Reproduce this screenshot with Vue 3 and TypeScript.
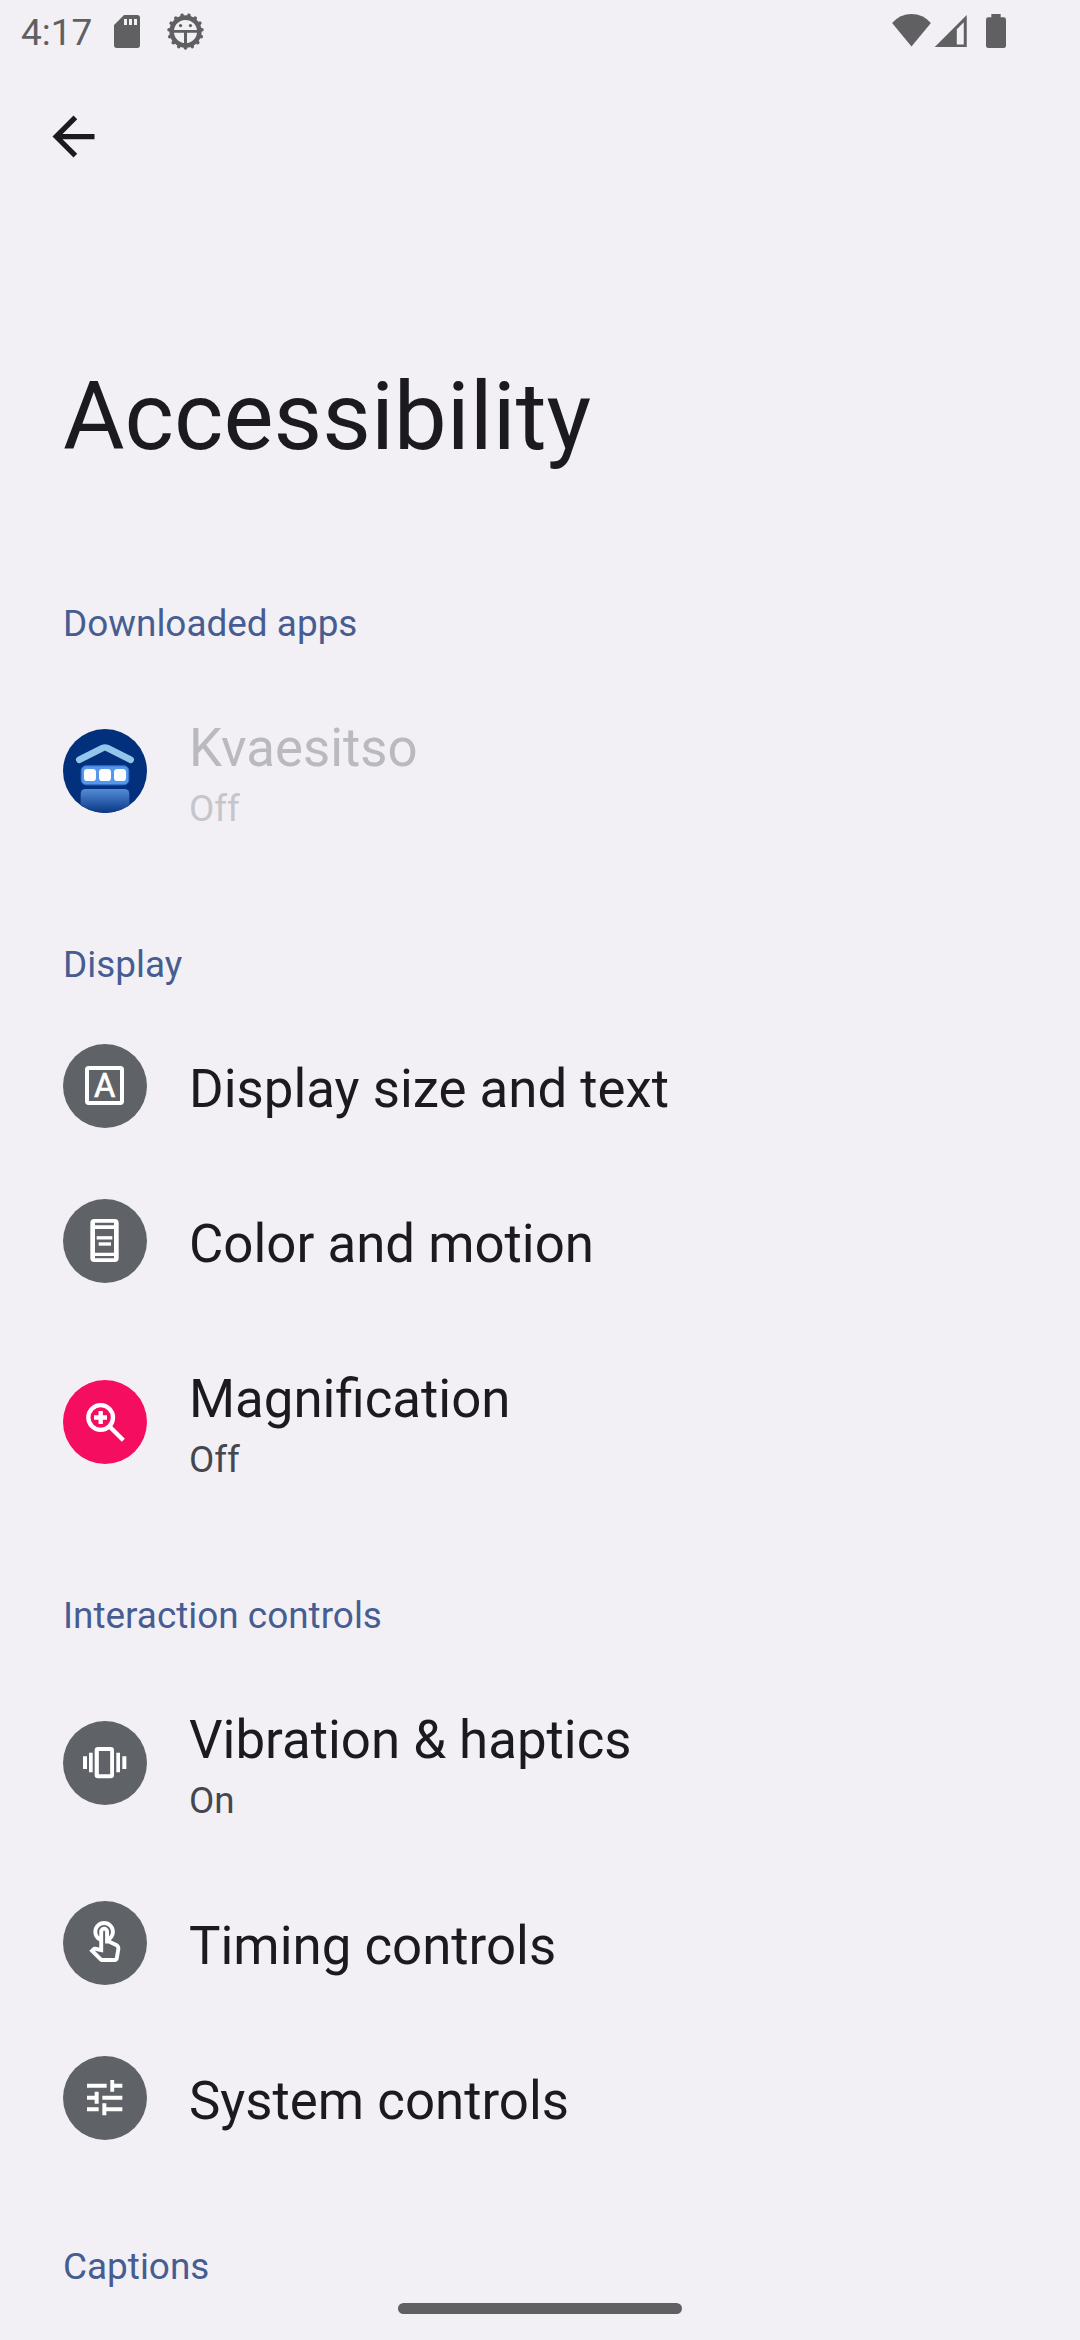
<script setup lang="ts">
type IconName = 'kvaesitso' | 'text' | 'color' | 'zoom' | 'vibration' | 'touch' | 'tune'

interface Item {
  icon: IconName
  title: string
  summary?: string
  disabled?: boolean
}

interface Section {
  title: string
  items: Item[]
}

const sections: Section[] = [
  {
    title: 'Downloaded apps',
    items: [{ icon: 'kvaesitso', title: 'Kvaesitso', summary: 'Off', disabled: true }],
  },
  {
    title: 'Display',
    items: [
      { icon: 'text', title: 'Display size and text' },
      { icon: 'color', title: 'Color and motion' },
      { icon: 'zoom', title: 'Magnification', summary: 'Off' },
    ],
  },
  {
    title: 'Interaction controls',
    items: [
      { icon: 'vibration', title: 'Vibration & haptics', summary: 'On' },
      { icon: 'touch', title: 'Timing controls' },
      { icon: 'tune', title: 'System controls' },
    ],
  },
  { title: 'Captions', items: [] },
]

const teeth = Array.from({ length: 15 }, (_, i) => i * 24)
</script>

<template>
  <div class="screen">
    <header class="status">
      <span class="clock">4:17</span>
      <svg class="sd" viewBox="0 0 78 99">
        <path fill-rule="evenodd" d="M30 0H70Q78 0 78 8V91Q78 99 70 99H8Q0 99 0 91V30ZM30 12V30H39V12ZM45 12V30H54V12ZM60 12V30H69V12Z" />
      </svg>
      <svg class="gear" viewBox="-56 -56 112 112">
        <circle r="42" fill="none" stroke="currentColor" stroke-width="14" />
        <line v-for="a in teeth" :key="a" y1="42" y2="50" stroke="currentColor" stroke-width="11" stroke-linecap="round" :transform="`rotate(${a})`" />
        <path d="M-38 -4.500H38V4H4.500V38H-4.500V4H-38Z" />
        <circle cx="-15" cy="-18" r="5" />
        <circle cx="15" cy="-18" r="5" />
      </svg>
      <span class="spacer"></span>
      <svg class="wifi" viewBox="0 0 117 98">
        <path d="M0 27Q24 0 58.500 0T117 27L58.500 98Z" />
      </svg>
      <svg class="signal" viewBox="0 0 98 98">
        <path fill-rule="evenodd" d="M0 98L98 0V98ZM68 43V89H89V22Z" />
      </svg>
      <svg class="battery" viewBox="0 0 60 102">
        <path d="M16 0H44V10H53Q60 10 60 17V95Q60 102 53 102H7Q0 102 0 95V17Q0 10 7 10H16Z" />
      </svg>
    </header>

    <div class="toolbar">
      <svg class="back" viewBox="0 0 24 24">
        <path d="M20 11H7.830l5.590-5.590L12 4l-8 8 8 8 1.410-1.410L7.830 13H20v-2z" />
      </svg>
    </div>

    <h1>Accessibility</h1>

    <main>
      <section v-for="s in sections" :key="s.title">
        <h2>{{ s.title }}</h2>
        <div v-for="item in s.items" :key="item.title" class="row" :class="[item.icon, { double: item.summary, disabled: item.disabled }]">
          <svg class="icon" viewBox="0 0 252 252">
            <defs>
              <clipPath id="disc"><circle cx="126" cy="126" r="126" /></clipPath>
              <linearGradient id="fade" x1="0" y1="0" x2="0" y2="1">
                <stop offset="0" stop-color="#538cd8" />
                <stop offset="1" stop-color="#05317f" />
              </linearGradient>
            </defs>
            <circle class="disc" cx="126" cy="126" r="126" />
            <g v-if="item.icon === 'kvaesitso'" clip-path="url(#disc)">
              <path d="M49 92L119 57Q126 54 133 57L203 92" fill="none" stroke="#94c6e9" stroke-width="20" stroke-linecap="round" stroke-linejoin="round" />
              <rect x="54.500" y="110.500" width="143" height="57" rx="15" fill="#5596ee" stroke="#3471cb" stroke-width="3" />
              <rect x="63" y="120" width="36" height="36" rx="10" fill="#fff" />
              <rect x="108" y="120" width="36" height="36" rx="10" fill="#fff" />
              <rect x="153" y="120" width="36" height="36" rx="10" fill="#fff" />
              <rect x="53" y="180" width="146" height="76" rx="14" fill="url(#fade)" />
            </g>
            <g v-else-if="item.icon === 'text'">
              <rect x="72" y="72" width="105" height="105" rx="5" fill="none" stroke="#fff" stroke-width="12" />
              <text x="125" y="159.500" text-anchor="middle" class="letter">A</text>
            </g>
            <g v-else-if="item.icon === 'color'" fill="#fff">
              <path fill-rule="evenodd" d="M94 60H155Q167 60 167 72V177Q167 189 155 189H94Q82 189 82 177V72Q82 60 94 60ZM96 71.500V78.500H153V71.500ZM96 90V161H153V90ZM96 171V178H153V171Z" />
              <rect x="101" y="111.500" width="47" height="10" />
              <rect x="107" y="130" width="37" height="10" />
            </g>
            <g v-else-if="item.icon === 'zoom'" fill="none" stroke="#fff">
              <circle cx="113" cy="112.500" r="37" stroke-width="13" />
              <path d="M138 138L181 181M93 112.500H132M113 93V132" stroke-width="13" />
            </g>
            <g v-else-if="item.icon === 'vibration'" fill="#fff">
              <path fill-rule="evenodd" d="M105 78H143Q153 78 153 88V162Q153 172 143 172H105Q95 172 95 162V88Q95 78 105 78ZM107.500 90V160H141.500V90Z" />
              <path d="M78 95H89V154H78ZM60 106H72V144H60ZM160 95H171V154H160ZM178 106H190V144H178Z" />
            </g>
            <g v-else-if="item.icon === 'touch'" fill="#fff" transform="translate(55.600 54.100) scale(5.860)">
              <path d="M18.190 12.440l-3.240-1.620c1.290-1 2.120-2.560 2.120-4.320c0-3.030-2.470-5.500-5.500-5.500s-5.500 2.470-5.500 5.500c0 2.130 1.220 3.980 3 4.890v3.260c-2.110-.45-2.010-.44-2.260-.44c-.53 0-1.030.21-1.410.59L4 16.220l5.090 5.090C9.520 21.750 10.120 22 10.740 22h6.300c.98 0 1.810-.7 1.970-1.670l.8-4.710C20.030 14.320 19.380 13.040 18.190 12.440zM17.840 15.290L17.040 20h-6.300c-.09 0-.17-.04-.24-.1l-3.680-3.680l4.250.89V6.500c0-.28.22-.5.5-.5c.28 0 .5.22.5.500v6h1.760l3.460 1.730C17.690 14.430 17.910 14.860 17.840 15.290zM8.070 6.500c0-1.930 1.570-3.500 3.500-3.500s3.500 1.570 3.500 3.500c0 .95-.38 1.810-1 2.440V6.500c0-1.380-1.120-2.500-2.500-2.500c-1.380 0-2.500 1.120-2.500 2.500v2.440C8.450 8.310 8.070 7.450 8.070 6.500z" />
            </g>
            <path
              v-else
              fill="#fff"
              d="M72 83.500H131V95H72ZM142 72H153.500V83.500H178V95H153.500V107H142ZM72 119H95V107H107V143H95V131H72ZM118 119H178V131H118ZM72 154H107V166H72ZM118 142H130V154H178V166H130V178H118Z"
            />
          </svg>
          <div class="labels">
            <div class="title">{{ item.title }}</div>
            <div v-if="item.summary" class="summary">{{ item.summary }}</div>
          </div>
        </div>
      </section>
    </main>

    <div class="nav-handle"></div>
  </div>
</template>

<style>
body {
  background: #f2f0f5;
}
</style>

<style scoped>
.screen {
  position: relative;
  width: 1080px;
  height: 2340px;
  overflow: hidden;
  background: #f2f0f5;
  color: #1b1b1f;
  font-family: Roboto, "Noto Sans", sans-serif;
}
svg {
  display: block;
  flex: none;
  fill: currentColor;
}
.status {
  display: flex;
  align-items: flex-start;
  height: 63px;
  box-sizing: border-box;
  padding: 0 74px 0 21px;
  color: #606062;
}
.clock {
  width: 93px;
  font-size: 37px;
  line-height: 42px;
  margin-top: 12px;
}
.sd {
  width: 26px;
  height: 33px;
  margin-top: 15px;
}
.gear {
  width: 37px;
  height: 37px;
  margin: 13px 0 0 26.500px;
}
.spacer {
  flex: 1;
}
.wifi {
  width: 39px;
  height: 32.500px;
  margin-top: 14px;
}
.signal {
  width: 33px;
  height: 32.500px;
  margin: 14.500px 0 0 3px;
}
.battery {
  width: 20px;
  height: 34px;
  margin: 14px 0 0 19px;
}
.toolbar {
  height: 147px;
  box-sizing: border-box;
  padding: 42px 0 0 42px;
}
.back {
  width: 63px;
  height: 63px;
}
h1 {
  height: 323px;
  box-sizing: border-box;
  margin: 0;
  padding: 151px 0 0 63px;
  font-size: 94.400px;
  font-weight: 400;
  line-height: 112px;
}
h2 {
  height: 134px;
  box-sizing: border-box;
  margin: 0;
  padding: 66px 0 0 63px;
  color: #475d92;
  font-size: 36.920px;
  font-weight: 400;
  line-height: 50px;
}
.row {
  display: flex;
  align-items: flex-start;
  gap: 42px;
  height: 155px;
  padding: 0 63px;
}
.row.double {
  height: 207px;
}
.row.vibration {
  height: 206px;
}
.row.tune {
  height: 156px;
}
.icon {
  width: 84px;
  height: 84px;
  margin-top: 36px;
}
.double .icon {
  margin-top: 62px;
}
.disc {
  fill: #5f6368;
}
.kvaesitso .disc {
  fill: #03307d;
}
.zoom .disc {
  fill: #f50d60;
}
.letter {
  fill: #fff;
  stroke: #fff;
  stroke-width: 2px;
  font-size: 98px;
}
.labels {
  padding-top: 46px;
}
.title {
  font-size: 52.800px;
  line-height: 70px;
}
.summary {
  margin-top: 1px;
  color: #45464f;
  font-size: 36.750px;
  line-height: 50px;
}
.disabled .title {
  color: #bababe;
}
.disabled .summary {
  color: #c5c5ca;
}
.nav-handle {
  position: absolute;
  left: 398px;
  top: 2303px;
  width: 284px;
  height: 11px;
  border-radius: 5.500px;
  background: #606062;
}
</style>
